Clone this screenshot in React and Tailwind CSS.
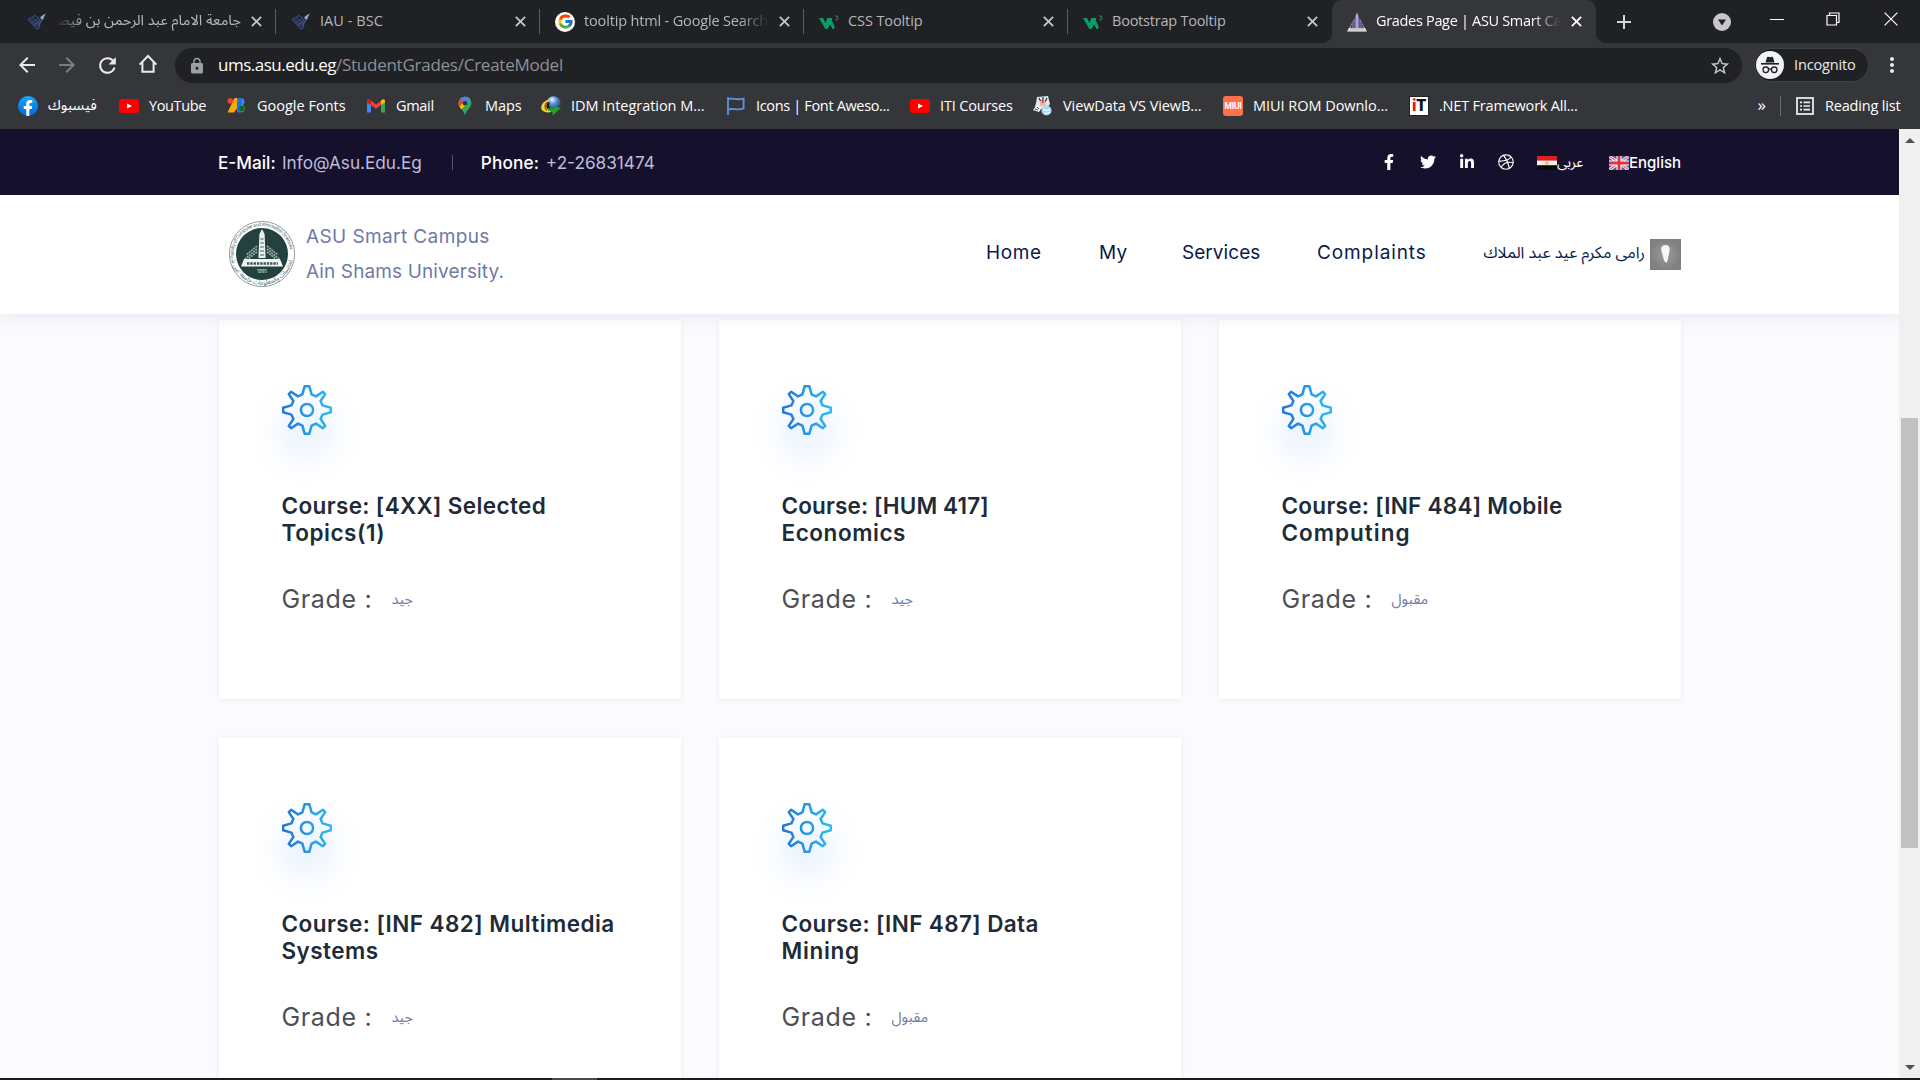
import { FaFacebookF, FaTwitter, FaLinkedinIn, FaDribbble } from "react-icons/fa";
import { FcGoogle } from "react-icons/fc";
import { MdArrowBack, MdArrowForward, MdRefresh, MdLock, MdStarBorder, MdMoreVert } from "react-icons/md";

/* ---------- favicons ---------- */

const Rocket = () => (
  <svg viewBox="0 0 20 20" className="size-5">
    <path d="M1 7.4 L8 3.4 L12.4 6.2 M1 7.4 L10 17 L12 16 L13.6 10 M2.6 6.6 L10.6 14.6 M5 5.2 L12.4 12.4 M4 11 L12 6 M6.6 13.6 L12.6 8.6" stroke="#34487c" strokeWidth="1.1" fill="none" />
    <path d="M8 13 L15.4 5 M10.6 14.4 L16 6.4" stroke="#43598f" strokeWidth="1.1" />
    <path d="M18.8 1.2 L13 5.2 L15.8 8 Z" fill="#93abd8" />
  </svg>
);

const GoogleIcon = () => (
  <span className="flex size-5 items-center justify-center rounded-full bg-white">
    <FcGoogle className="size-[17px]" />
  </span>
);

const W3 = () => (
  <svg viewBox="0 0 20 20" className="size-5">
    <path d="M0 6 H4 L6.6 11 L8.2 6 H13.4 L12.6 8 L15.6 14.4 L15.2 17 H13.6 L11 12.4 L8.6 17 H6.4 Z" fill="#0a9d68" />
    <path d="M16.3 4 H18.8 L17.6 5.4 Q19.2 5.6 19 6.8 Q18.6 8.2 16.4 7.6" fill="none" stroke="#0a9d68" strokeWidth="1" />
  </svg>
);

const Obelisk = () => (
  <svg viewBox="0 0 20 20" className="size-5">
    <path d="M10 0 L12 5 V16 H8 V5 Z" fill="#7e74b8" />
    <path d="M10 2 V16" stroke="#d8d2f2" strokeWidth="1" />
    <path d="M7.5 6 L2 16 H7.5 Z M12.5 6 L18 16 H12.5 Z" fill="#8d84c0" />
    <path d="M6 10 L6 16 M14 10 V16 M4.5 13 V16 M15.7 13 V16" stroke="#2f2b55" strokeWidth=".8" />
    <path d="M2 16 H18 L20 19.5 H0 Z" fill="#f1efff" />
    <path d="M3 17 H17" stroke="#e0906f" strokeWidth="1.2" />
    <path d="M1 18.8 H19" stroke="#8fd0c0" strokeWidth=".8" />
  </svg>
);

const Facebook = () => (
  <span className="flex size-5 items-end justify-center overflow-hidden rounded-full bg-gradient-to-b from-[#19a9fb] to-[#0866e0]">
    <FaFacebookF className="size-[16px] text-white" />
  </span>
);

const YouTube = () => (
  <svg viewBox="0 0 20 20" className="size-5">
    <rect x="0" y="3" width="20" height="14" rx="3" fill="#fe0000" />
    <path d="M8 7.4 L13 10 L8 12.6 Z" fill="#fff" />
  </svg>
);

const GoogleFonts = () => (
  <svg viewBox="0 0 20 20" className="size-5">
    <path d="M7.5 2 H11 V11 L7 16.5 H0.5 Z" fill="#f9ab00" />
    <circle cx="3.2" cy="4.8" r="2.9" fill="#ea4335" />
    <rect x="10" y="2" width="4.6" height="14.5" fill="#1a73e8" />
    <path d="M14.5 2 A3.8 3.8 0 0 1 14.5 9.4 Z" fill="#4285f4" />
    <path d="M14.5 8.4 A4.2 4.2 0 0 1 14.5 16.6 Z" fill="#34a853" />
    <circle cx="14.6" cy="12.4" r="2.6" fill="#0d652d" />
  </svg>
);

const Gmail = () => (
  <svg viewBox="0 0 20 20" className="size-5">
    <path d="M1 6 V16.5 H5 V9 Z" fill="#4285f4" />
    <path d="M15 9 V16.5 H19 V6 Z" fill="#34a853" />
    <path d="M1 5 Q1 2.6 3.5 3.4 L10 8.6 L16.5 3.4 L15 9 L10 12.8 L5 9 L1 6.4 Z" fill="#ea4335" />
    <path d="M1 5 Q1 2.6 3.5 3.4 L5 4.6 V9 L1 6.4 Z" fill="#c5221f" />
    <path d="M19 5 Q19 2.6 16.5 3.4 L15 4.6 V9 L19 6.4 Z" fill="#fbbc04" />
  </svg>
);

const MapsPin = () => (
  <svg viewBox="0 0 20 20" className="size-5">
    <path d="M10 .8 A6.4 6.4 0 0 1 16.4 7.2 C16.4 12 11.6 13 10 19.4 C8.4 13 3.6 12 3.6 7.2 A6.4 6.4 0 0 1 10 .8 Z" fill="#34a853" />
    <path d="M10 .8 A6.4 6.4 0 0 1 15.4 3.8 L6.5 13.5 C5 11.6 3.6 10 3.6 7.2 A6.4 6.4 0 0 1 10 .8 Z" fill="#fbbc04" />
    <path d="M10 .8 A6.4 6.4 0 0 1 15.4 3.8 L10 9.5 L5 3.2 A6.4 6.4 0 0 1 10 .8 Z" fill="#4285f4" />
    <path d="M5 3.2 L8.5 6 L4.4 10.8 C3.4 8.6 3.2 5.4 5 3.2 Z" fill="#ea4335" />
    <circle cx="10" cy="7.2" r="2.3" fill="#35363a" />
  </svg>
);

const Idm = () => (
  <svg viewBox="0 0 20 20" className="size-5">
    <defs>
      <radialGradient id="globe" cx=".4" cy=".25" r=".8">
        <stop offset="0" stopColor="#e8f4ff" />
        <stop offset=".4" stopColor="#5d94d6" />
        <stop offset="1" stopColor="#17365f" />
      </radialGradient>
    </defs>
    <circle cx="12.5" cy="7.2" r="7" fill="url(#globe)" />
    <path d="M9 3 C1 5 -2 12 2 15 C4 16.6 8 17 11 15.6 C5 15 4.6 9 9 3 Z" fill="#e3df2e" />
    <path d="M5.4 6 C2.6 9 2.6 13 6.6 15.6 C5 12.6 5 9.4 7.4 5.4 Z" fill="#c2451c" />
    <path d="M7 6.5 C5 9.5 5 12 8 13.6 L12 14 C8.4 12.4 7.4 10 8.8 6 Z" fill="#141a14" />
    <path d="M6.6 12 L13 12.6 V10.4 L20 12 L11.5 19.6 L11.6 16.2 C9 15.4 7.4 14 6.6 12 Z" fill="#20a42a" />
  </svg>
);

const Flag = () => (
  <svg viewBox="0 0 20 20" className="size-5">
    <path d="M2 1 V19" stroke="#5a93e0" strokeWidth="1.8" />
    <path d="M2 3.4 C6 1 10 4.8 17.6 2.6 V12.4 C11 15.2 7 11.6 2 13.6" fill="none" stroke="#5a93e0" strokeWidth="1.8" />
  </svg>
);

const Cartoon = () => (
  <svg viewBox="0 0 20 20" className="size-5">
    <path d="M4 1 L15 0 L17 8 L14 12 L1 14 L3 7 Z" fill="#dbe9f0" />
    <path d="M6 2 L8 6 M10 1 L10 6 M14 2 L12 6" stroke="#30343a" strokeWidth="1.2" />
    <path d="M7 5 H12 L13 10 H7 Z" fill="#f0b79a" />
    <path d="M9 4 L10 7" stroke="#e03c2e" strokeWidth="1.5" />
    <path d="M0 14 L5 9 L8 13 L6 16 Z" fill="#f4f4f4" />
    <path d="M2 13 L5 14 M4 11 L6 13" stroke="#333" strokeWidth=".9" />
    <circle cx="13.5" cy="14.5" r="5" fill="#a9d8f2" />
    <path d="M10 13 Q13 16 17 13 M11 17 Q14 18 17 16" stroke="#f2fbff" strokeWidth="1.2" fill="none" />
  </svg>
);

const Miui = () => (
  <span className="flex size-5 items-center justify-center rounded-[3px] bg-[#ff6f4a] font-['Roboto',sans-serif] text-[8.5px] font-bold tracking-[-0.3px] text-white">
    MIUI
  </span>
);

const It = () => (
  <span className="flex size-5 items-center justify-center border border-[#222] bg-white font-['Roboto',sans-serif] text-[16px] leading-none font-black text-[#111]">
    <span className="text-[#d02027]">i</span>T
  </span>
);

/* ---------- browser chrome ---------- */

const X = ({ className }) => (
  <svg viewBox="0 0 10 10" className={className}>
    <path d="M.8 .8 L9.2 9.2 M9.2 .8 L.8 9.2" stroke="currentColor" strokeWidth="1.7" />
  </svg>
);

const ARABIC = "font-['Noto_Sans_Arabic','DejaVu_Sans',sans-serif]";

const tabs = [
  { title: "جامعة الامام عبد الرحمن بن فيصل", icon: Rocket, rtl: true, fade: true },
  { title: "IAU - BSC", icon: Rocket, tracking: "tracking-[0.06px]" },
  { title: "tooltip html - Google Search", icon: GoogleIcon, tracking: "tracking-[-0.16px]", fade: true },
  { title: "CSS Tooltip", icon: W3, tracking: "tracking-[-0.1px]" },
  { title: "Bootstrap Tooltip", icon: W3, tracking: "tracking-[-0.23px]" },
  { title: "Grades Page | ASU Smart Campus", icon: Obelisk, tracking: "tracking-[-0.32px]", fade: true, active: true },
];

function Tab({ tab, last }) {
  const Icon = tab.icon;
  const fadeClass = !tab.fade
    ? ""
    : tab.rtl
      ? "[mask-image:linear-gradient(to_left,black_84%,transparent)]"
      : "[mask-image:linear-gradient(to_right,black_84%,transparent)]";
  return (
    <div
      className={`relative flex h-[43px] w-[264px] items-center pl-[15px] ${
        tab.active ? "rounded-t-[10px] bg-[#35363a] text-white" : "text-[#b4b7bb]"
      }`}
    >
      {tab.active && (
        <>
          <span className="absolute bottom-0 -left-[10px] size-[10px] bg-[radial-gradient(circle_at_0_0,transparent_10px,#35363a_10.5px)]" />
          <span className="absolute -right-[10px] bottom-0 size-[10px] bg-[radial-gradient(circle_at_100%_0,transparent_10px,#35363a_10.5px)]" />
        </>
      )}
      <Icon />
      <span
        dir={tab.rtl ? "rtl" : "ltr"}
        className={`mb-[2px] ml-[9px] w-[185px] overflow-hidden text-[14.5px] leading-[24px] whitespace-nowrap ${tab.rtl ? ARABIC : ""} ${tab.tracking || ""} ${fadeClass}`}
      >
        {tab.title}
      </span>
      <X className={`ml-[10px] size-[11px] ${tab.active ? "text-white" : "text-[#c4c6c9]"}`} />
      {!last && !tab.active && <span className="absolute top-[9px] right-0 h-[25px] w-px bg-[#5b5d61]" />}
    </div>
  );
}

function TabStrip() {
  return (
    <div className="flex h-[43px] bg-[#202124] pl-[12px]">
      {tabs.map((t, i) => (
        <Tab key={t.title} tab={t} last={i === 4} />
      ))}
      <div className="flex flex-1 items-center pl-[20px] text-[#d5d7da]">
        <svg viewBox="0 0 16 16" className="size-[16px]">
          <path d="M8 1 V15 M1 8 H15" stroke="currentColor" strokeWidth="2" />
        </svg>
        <svg viewBox="0 0 18 18" className="ml-[81px] size-[18px]">
          <circle cx="9" cy="9" r="9" fill="#c6c8cb" />
          <path d="M5 6.6 H13 L9 12.4 Z" fill="#202124" />
        </svg>
        <div className="mb-[6px] ml-auto flex items-center text-white">
          <svg viewBox="0 0 14 14" className="size-[14px]">
            <path d="M0 7.5 H14" stroke="currentColor" />
          </svg>
          <svg viewBox="0 0 14 14" className="ml-[42px] size-[14px]">
            <path d="M1 3.5 H10.5 V13 H1 Z M3.5 3.5 V1 H13 V10.5 H10.5" fill="none" stroke="currentColor" strokeWidth="1.2" />
          </svg>
          <svg viewBox="0 0 14 14" className="mr-[22px] ml-[44px] size-[14px]">
            <path d="M.6 .6 L13.4 13.4 M13.4 .6 L.6 13.4" stroke="currentColor" strokeWidth="1.2" />
          </svg>
        </div>
      </div>
    </div>
  );
}

function Toolbar() {
  return (
    <div className="flex h-[44px] items-center pl-[7px] text-[#e8eaed]">
      <div className="flex w-[168px]">
        <div className="flex w-[40px] justify-center"><MdArrowBack className="size-[24px]" /></div>
        <div className="flex w-[40px] justify-center text-[#7c7d80]"><MdArrowForward className="size-[24px]" /></div>
        <div className="flex w-[41px] justify-center"><MdRefresh className="size-[25px]" /></div>
        <div className="flex w-[40px] justify-center">
          <svg viewBox="0 0 22 22" className="size-[22px]">
            <path d="M2.6 11.6 L11 3 L19.4 11.6 M5.4 9.6 V18.8 H16.6 V9.6" fill="none" stroke="currentColor" strokeWidth="2" />
          </svg>
        </div>
      </div>
      <div className="mt-px flex h-[35px] w-[1567px] items-center rounded-full bg-[#202124] pr-[11px] pl-[13px]">
        <MdLock className="size-[18px] text-[#9aa0a6]" />
        <span className="mb-[2px] ml-[12px] text-[17px] leading-[24px] tracking-[-0.49px] text-white">ums.asu.edu.eg</span>
        <span className="mb-[2px] text-[17px] leading-[24px] tracking-[-0.25px] text-[#8d9196]">/StudentGrades/CreateModel</span>
        <MdStarBorder className="ml-auto size-[22px] text-[#c4c7ca]" />
      </div>
      <div className="ml-[12px] flex h-[34px] w-[115px] items-center rounded-full border border-[#3f4043] bg-[#202124] pl-[1px]">
        <svg viewBox="0 0 28 28" className="size-[28px]">
          <circle cx="14" cy="14" r="14" fill="#f1f3f4" />
          <path d="M9.5 11.5 L11 6.2 Q11.5 5.4 12.4 5.8 Q14 6.6 15.6 5.8 Q16.5 5.4 17 6.2 L18.5 11.5 Z" fill="#202124" />
          <rect x="5" y="12" width="18" height="1.6" fill="#202124" />
          <circle cx="9.8" cy="18.8" r="2.8" fill="none" stroke="#202124" strokeWidth="1.3" />
          <circle cx="18.2" cy="18.8" r="2.8" fill="none" stroke="#202124" strokeWidth="1.3" />
          <path d="M12.6 18.4 Q14 17.4 15.4 18.4" fill="none" stroke="#202124" strokeWidth="1.2" />
        </svg>
        <span className="ml-[10px] text-[14.5px] tracking-[-0.14px] text-[#e8eaed]">Incognito</span>
      </div>
      <MdMoreVert className="ml-[11px] size-[24px]" />
    </div>
  );
}

const bookmarks = [
  { label: "فيسبوك", icon: Facebook, cls: "w-[101px]", rtl: true },
  { label: "YouTube", icon: YouTube, cls: "w-[108px] tracking-[-0.38px]" },
  { label: "Google Fonts", icon: GoogleFonts, cls: "w-[139px]" },
  { label: "Gmail", icon: Gmail, cls: "w-[89px] tracking-[-0.3px]" },
  { label: "Maps", icon: MapsPin, cls: "w-[86px] tracking-[-0.1px]" },
  { label: "IDM Integration M...", icon: Idm, cls: "w-[185px] tracking-[-0.03px]" },
  { label: "Icons | Font Aweso...", icon: Flag, cls: "w-[184px] tracking-[-0.34px]" },
  { label: "ITI Courses", icon: YouTube, cls: "w-[123px] tracking-[-0.15px]" },
  { label: "ViewData VS ViewB...", icon: Cartoon, cls: "w-[190px] tracking-[-0.08px]" },
  { label: "MIUI ROM Downlo...", icon: Miui, cls: "w-[186px] tracking-[-0.04px]" },
  { label: ".NET Framework All...", icon: It, cls: "w-[180px] tracking-[-0.2px]" },
];

function BookmarksBar() {
  return (
    <div className="flex h-[42px] items-center pb-[4px] pl-[18px] text-[14.5px] text-white">
      {bookmarks.map(({ label, icon: Icon, cls, rtl }) => (
        <div key={label} className={`flex shrink-0 items-center gap-[10px] whitespace-nowrap ${cls}`}>
          <Icon />
          <span className={rtl ? ARABIC : ""}>{label}</span>
        </div>
      ))}
      <div className="ml-auto flex items-center">
        <span className="pb-[3px] text-[17px] leading-none">»</span>
        <span className="ml-[14px] h-[20px] w-px bg-[#6a6c70]" />
        <svg viewBox="0 0 18 18" className="ml-[15px] size-[18px]">
          <rect x="1" y="1" width="16" height="16" fill="none" stroke="#e8eaed" strokeWidth="1.8" />
          <path d="M4 5.4 H6 M4 9 H6 M4 12.6 H6 M7.5 5.4 H14 M7.5 9 H14 M7.5 12.6 H14" stroke="#e8eaed" strokeWidth="1.7" />
        </svg>
        <span className="ml-[11px] w-[95px] tracking-[-0.18px] whitespace-nowrap">Reading list</span>
      </div>
    </div>
  );
}

/* ---------- page ---------- */

const EgyptFlag = () => (
  <svg viewBox="0 0 20 14" className="h-[14px] w-[20px]">
    <rect width="20" height="5" fill="#e01e1e" />
    <rect y="4.6" width="20" height="5" fill="#f2f2f2" />
    <rect y="9.3" width="20" height="4.7" fill="#0a0a0a" />
    <path d="M10 5 L12 7 L10 9.4 L8 7 Z" fill="#e0c04a" />
  </svg>
);

const UkFlag = () => (
  <svg viewBox="0 0 20 14" className="h-[14px] w-[20px]">
    <rect width="20" height="14" fill="#3d5fb0" />
    <path d="M0 0 L20 14 M20 0 L0 14" stroke="#f3d9e0" strokeWidth="3.2" />
    <path d="M0 0 L20 14 M20 0 L0 14" stroke="#e0475a" strokeWidth="1" />
    <path d="M10 0 V14 M0 7 H20" stroke="#fff" strokeWidth="5" />
    <path d="M10 0 V14 M0 7 H20" stroke="#e2303f" strokeWidth="2.8" />
  </svg>
);

function InfoBar() {
  return (
    <div className="flex h-[66px] shrink-0 items-center bg-[#15112d] pr-[218px] pl-[218px] text-[17.2px] text-[#c0bbdb]">
      <span className="mt-[1px] w-[64px] font-medium text-white">E-Mail:</span>
      <span className="mt-[1px]">Info@Asu.Edu.Eg</span>
      <span className="ml-[30px] h-[15px] w-px bg-[#57536f]" />
      <span className="mt-[1px] ml-[28px] w-[65px] font-medium tracking-[0.15px] text-white">Phone:</span>
      <span className="mt-[1px]">+2-26831474</span>
      <div className="ml-auto flex items-center text-white">
        <div className="flex gap-[23px]">
          <FaFacebookF className="size-[16px]" />
          <FaTwitter className="size-[16px]" />
          <FaLinkedinIn className="size-[16px]" />
          <FaDribbble className="size-[16px]" />
        </div>
        <div className="ml-[23px] flex items-center pt-[2px] text-[15px]">
          <EgyptFlag />
          <span className={`w-[27px] text-[14px] leading-[20px] ${ARABIC}`}>عربى</span>
        </div>
        <div className="ml-[25px] flex items-center pt-[2px] text-[15px] leading-[20px] font-medium">
          <UkFlag />
          <span className="w-[52px]">English</span>
        </div>
      </div>
    </div>
  );
}

const Seal = () => (
  <svg viewBox="-34 -34 68 68" className="mb-[1px] size-[68px]">
    <defs>
      <path id="sealTop" d="M-28.4 4 A28.6 28.6 0 1 1 28.4 4" />
      <path id="sealBottom" d="M-30.5 6 A31.2 31.2 0 0 0 30.5 6" />
    </defs>
    <circle r="32.6" fill="#fff" stroke="#8c9f9d" strokeWidth="1" />
    <circle r="26" fill="#23413e" />
    <text fontSize="4.6" fill="#48605d" fontFamily="Inter, sans-serif" textLength="88">
      <textPath href="#sealTop">Faculty of Computer and Information Sciences</textPath>
    </text>
    <text fontSize="6" fill="#48605d" fontFamily="'Noto Sans Arabic', sans-serif" textAnchor="middle">
      <textPath href="#sealBottom" startOffset="50%">كلية الحاسبات والمعلومات جامعة عين شمس</textPath>
    </text>
    <path d="M-2.6 -20 L0 -25 L2.6 -20 L3.6 4 H-3.6 Z" fill="#e8efee" />
    <path d="M-1.6 -15 H1.6 M-1.6 -11 H1.8 M-1.8 -7 H1.8 M-2 -3 H2 M-2 1 H2" stroke="#45605d" strokeWidth="1" />
    <path d="M-5 -8 L-16 1 M-5 -5 L-17 5 M-5 -2 L-14 5 M5 -8 L16 1 M5 -5 L17 5 M5 -2 L14 5" stroke="#9db0ae" strokeWidth="1.6" strokeDasharray="2 .8" />
    <path d="M-18 5 H18 L21 12.5 H-21 Z" fill="#f2f6f5" />
    <path d="M-15 9.5 H16" stroke="#3e5855" strokeWidth="2.6" strokeDasharray="2.4 .9" />
    <text y="18.6" fontSize="4.5" fill="#dfe8e7" textAnchor="middle" fontFamily="Inter, sans-serif">1995</text>
  </svg>
);

const Avatar = () => (
  <svg viewBox="0 0 31 31" className="size-[31px]">
    <defs>
      <radialGradient id="avatarBg">
        <stop offset="0" stopColor="#9c9c9c" />
        <stop offset="1" stopColor="#808080" />
      </radialGradient>
    </defs>
    <rect width="31" height="31" fill="url(#avatarBg)" />
    <path d="M15.5 6 C19.6 6 20.4 10 19.2 13.6 C18.6 16 18.2 19 17.6 21.6 L16.4 24 L14 21.4 C13.2 18.6 12.8 16 11.8 13.2 C10.4 9 11.4 6 15.5 6 Z" fill="#f7f7f7" />
  </svg>
);

function Header() {
  return (
    <header className="relative z-10 flex h-[119px] shrink-0 items-center bg-white pr-[218px] pl-[228px] shadow-[0_2px_16px_rgba(40,30,90,0.1)]">
      <Seal />
      <div className="mb-[2px] ml-[10px] text-[19px] leading-[35px] text-[#6f7aa5]">
        <div className="tracking-[0.4px]">ASU Smart Campus</div>
        <div className="tracking-[0.12px]">Ain Shams University.</div>
      </div>
      <nav className="mb-[3px] ml-auto flex text-[19px] leading-[24px] whitespace-nowrap text-[#0b1a4c]">
        <span className="w-[113px] tracking-[0.6px]">Home</span>
        <span className="w-[83px] tracking-[0.2px]">My</span>
        <span className="w-[135px] tracking-[0.05px]">Services</span>
        <span className="w-[110px] tracking-[0.9px]">Complaints</span>
      </nav>
      <div className="ml-[57px] flex items-center gap-[5px] text-[#0b1a4c]">
        <span dir="rtl" className={`mb-[4px] w-[161px] text-[16px] leading-[24px] whitespace-nowrap ${ARABIC}`}>رامى مكرم عيد عبد الملاك</span>
        <Avatar />
      </div>
    </header>
  );
}

const GearOutline = () => (
  <svg viewBox="-25 -25 50 50" className="relative size-[50px]">
    <defs>
      <linearGradient id="gearStroke" gradientUnits="userSpaceOnUse" x1="-25" y1="0" x2="25" y2="0">
        <stop offset="0" stopColor="#2273da" />
        <stop offset="1" stopColor="#2bbdf0" />
      </linearGradient>
    </defs>
    <g fill="none" stroke="url(#gearStroke)" strokeWidth="2.5" strokeLinejoin="round">
      <path d="M-2.3 -23.8 H2.3 L4.6 -15.6 L9 -13.6 L15.9 -18.2 L18.2 -15.9 L13.6 -9 L15.6 -4.6 L23.8 -2.3 V2.3 L15.6 4.6 L13.6 9 L18.2 15.9 L15.9 18.2 L9 13.6 L4.6 15.6 L2.3 23.8 H-2.3 L-4.6 15.6 L-9 13.6 L-15.9 18.2 L-18.2 15.9 L-13.6 9 L-15.6 4.6 L-23.8 2.3 V-2.3 L-15.6 -4.6 L-13.6 -9 L-18.2 -15.9 L-15.9 -18.2 L-9 -13.6 L-4.6 -15.6 Z" />
      <circle r="6.1" />
    </g>
  </svg>
);

const courses = [
  { lines: [["Course: [4XX] Selected", "tracking-[0.36px]"], ["Topics(1)", "tracking-[0.55px]"]], grade: "جيد" },
  { lines: [["Course: [HUM 417]", "tracking-[0.13px]"], ["Economics", "tracking-[0.55px]"]], grade: "جيد" },
  { lines: [["Course: [INF 484] Mobile", "tracking-[0.28px]"], ["Computing", "tracking-[1px]"]], grade: "مقبول" },
  { lines: [["Course: [INF 482] Multimedia", "tracking-[0.44px]"], ["Systems", "tracking-[0.45px]"]], grade: "جيد" },
  { lines: [["Course: [INF 487] Data", "tracking-[0.38px]"], ["Mining", "tracking-[0.7px]"]], grade: "مقبول" },
];

function CourseCard({ course }) {
  return (
    <article className="h-[379px] bg-white px-[63px] pt-[65px] shadow-[0_1px_6px_rgba(40,30,90,0.08)]">
      <div className="relative size-[50px]">
        <span className="absolute top-[16px] left-[-5px] size-[60px] rounded-full bg-[#dfebfe] opacity-60 blur-[16px]" />
        <GearOutline />
      </div>
      <h3 className="mt-[57px] text-[22.5px] leading-[27px] font-semibold whitespace-nowrap text-[#202b38]">
        {course.lines.map(([text, tracking]) => (
          <span key={text} className={`block ${tracking}`}>{text}</span>
        ))}
      </h3>
      <div className="mt-[37px] flex items-center leading-[30px]">
        <span className="w-[110px] text-[25px] tracking-[0.65px] text-[#4a4f5c]">Grade :</span>
        <span className={`pt-[2px] text-[14.5px] text-[#6f7aa5] ${ARABIC}`}>{course.grade}</span>
      </div>
    </article>
  );
}

function Scrollbar() {
  return (
    <div className="flex w-[21px] shrink-0 flex-col items-center bg-[#f0f0f0]">
      <svg viewBox="0 0 10 5" className="mt-[9px] h-[5px] w-[10px]"><path d="M0 5 L5 0 L10 5 Z" fill="#505050" /></svg>
      <div className="mt-[275px] h-[430px] w-[17px] bg-[#c1c1c1]" />
      <svg viewBox="0 0 10 5" className="mt-auto mb-[8px] h-[5px] w-[10px]"><path d="M0 0 L5 5 L10 0 Z" fill="#505050" /></svg>
    </div>
  );
}

export default function App() {
  return (
    <div className="flex h-[1080px] w-[1920px] flex-col overflow-hidden bg-[#1c1c1e] font-['Open_Sans',sans-serif]">
      <TabStrip />
      <div className="h-[86px] shrink-0 bg-[#35363a]">
        <Toolbar />
        <BookmarksBar />
      </div>
      <div className="flex h-[949px] shrink-0">
        <div className="flex w-[1899px] flex-col overflow-hidden bg-[#fbfbfe] font-['Inter',sans-serif]">
          <InfoBar />
          <Header />
          <main className="grid shrink-0 grid-cols-[462px_462px_462px] gap-x-[38px] gap-y-[39px] pt-[6px] pl-[218.5px]">
            {courses.map((c) => (
              <CourseCard key={c.lines[0][0]} course={c} />
            ))}
          </main>
        </div>
        <Scrollbar />
      </div>
      <div className="flex h-[2px] shrink-0 pl-[552px]">
        <div className="w-[45px] bg-[#4a4a4c]" />
      </div>
    </div>
  );
}
